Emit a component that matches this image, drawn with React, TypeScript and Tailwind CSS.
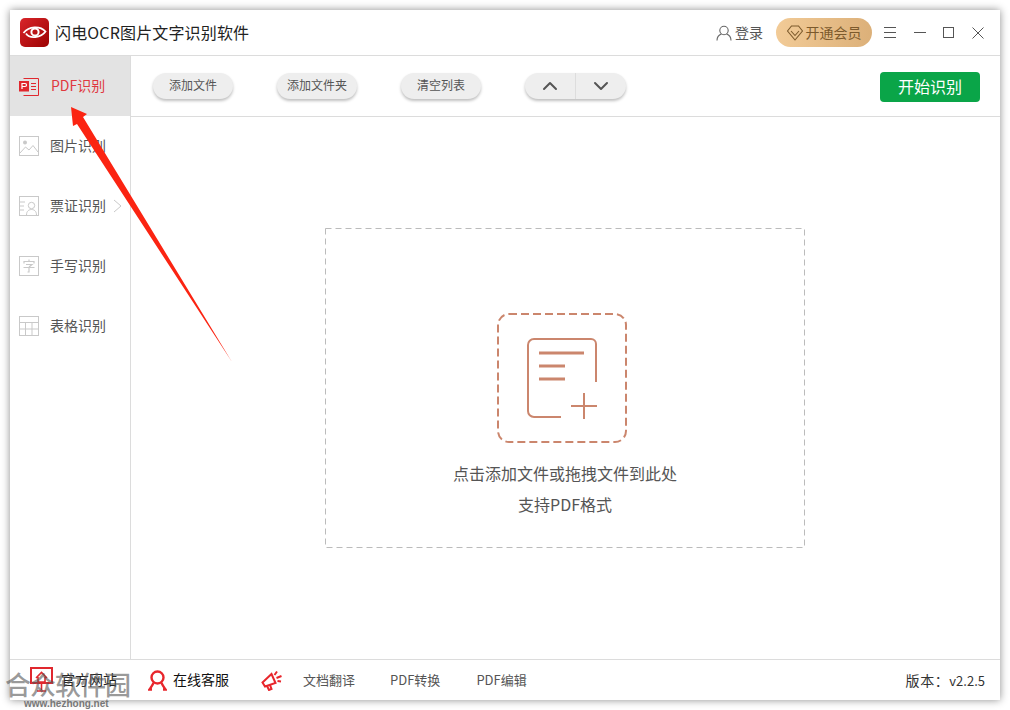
import { ChevronUp, ChevronDown } from 'lucide-react';

const cjk = { fontFamily: '"Noto Sans CJK SC", "Noto Sans", sans-serif' };

function Logo() {
  return (
    <svg width="29" height="29" viewBox="0 0 29 29" fill="none">
      <defs>
        <linearGradient id="logoBg" x1="0" y1="0" x2="1" y2="1">
          <stop offset="0" stopColor="#d9252a" />
          <stop offset="1" stopColor="#9c0202" />
        </linearGradient>
      </defs>
      <rect width="29" height="29" rx="5" fill="url(#logoBg)" />
      <path d="M3.5 15 C9 8 20 7.5 25.5 13.5 C21 20 9.5 21 6 15.5" stroke="#fff" strokeWidth="1.8" />
      <circle cx="15" cy="14" r="3.6" stroke="#fff" strokeWidth="2" />
    </svg>
  );
}

function PdfIcon() {
  return (
    <svg width="21" height="21" viewBox="0 0 21 21" fill="none">
      <path d="M4.5 2.5 H19.5 V19.5 H4.5" stroke="#e0282e" strokeWidth="1" />
      <rect x="0" y="5" width="10" height="10.5" fill="#e0282e" />
      <path d="M3 13 V7.5 H6 A1.5 1.5 0 0 1 6 10.5 H3" stroke="#fff" strokeWidth="1.2" />
      <path d="M12 7.5 H17 M12 10.5 H17 M12 13.5 H17" stroke="#e0282e" strokeWidth="1" />
    </svg>
  );
}

function ImageIcon() {
  return (
    <svg width="20" height="20" viewBox="0 0 20 20" fill="none" stroke="#c9c9c9">
      <rect x="0.5" y="0.5" width="19" height="19" />
      <circle cx="6" cy="6.5" r="2" fill="#c9c9c9" stroke="none" />
      <path d="M1 17 L6.5 11 L10 14 L14 9.5 L19 16" />
    </svg>
  );
}

function CardIcon() {
  return (
    <svg width="20" height="20" viewBox="0 0 20 20" fill="none" stroke="#c9c9c9">
      <rect x="0.5" y="0.5" width="19" height="19" />
      <path d="M1 6 H6 M1 10 H5 M1 14 H5" />
      <circle cx="12.5" cy="9.5" r="3.2" />
      <path d="M7.5 19 C7.5 15 10 13.5 12.5 13.5 C15 13.5 17.5 15 17.5 19" />
    </svg>
  );
}

function HandIcon() {
  return (
    <svg width="20" height="20" viewBox="0 0 20 20" fill="none" stroke="#c9c9c9">
      <rect x="0.5" y="0.5" width="19" height="19" />
      <path d="M10 3.5 V5 M5 7.5 V5.5 H15 V7.5 M7 8.5 H13 L10 11 M4.5 11.5 H15.5 M10 11 V16 L8.5 16" strokeWidth="1.2" />
    </svg>
  );
}

function TableIcon() {
  return (
    <svg width="20" height="20" viewBox="0 0 20 20" fill="none" stroke="#c9c9c9">
      <rect x="0.5" y="0.5" width="19" height="19" />
      <path d="M1 6.5 H19 M1 13 H19 M6.5 6.5 V19 M13 6.5 V19" />
    </svg>
  );
}

function FileAddIcon() {
  return (
    <svg width="70" height="82" viewBox="0 0 70 82" fill="none" stroke="#cb866d" strokeWidth="2">
      <path d="M69 45 V7 A5 5 0 0 0 64 2 H7 A6 6 0 0 0 1 8 V74 A6 6 0 0 0 7 80 H34" />
      <path d="M12 16 H57 M12 29 H38 M12 42 H38" strokeWidth="3" />
      <path d="M44 69 H70 M57 56 V82" />
    </svg>
  );
}

function SideItem(props: { icon: React.ReactNode; label: string; active?: boolean; more?: boolean }) {
  return (
    <div className={props.active ? 'relative flex h-[60px] items-center gap-[11px] bg-[#e3e3e3] pl-[9px]' : 'relative flex h-[60px] items-center gap-[11px] pl-[9px]'}>
      {props.icon}
      <span className={props.active ? 'pb-[2px] text-[14px] text-[#e0383e]' : 'pb-[2px] text-[14px] text-[#555]'}>{props.label}</span>
      {props.more && (
        <svg className="absolute right-[8px] top-[23px]" width="9" height="14" viewBox="0 0 9 14" fill="none" stroke="#c9c9c9">
          <path d="M1 1 L8 7 L1 13" />
        </svg>
      )}
    </div>
  );
}

function ToolButton({ label }: { label: string }) {
  return (
    <button className="flex h-[26px] w-[80px] items-center justify-center rounded-full bg-[#eeeeee] pb-[2px] text-[12px] text-[#555] shadow-[0_2px_3px_rgba(0,0,0,0.25)]">
      {label}
    </button>
  );
}

export default function App() {
  return (
    <div className="relative h-[710px] w-[1010px] overflow-hidden bg-white p-[10px]" style={cjk}>
      <div className="flex h-[690px] w-[990px] flex-col bg-white shadow-[0_0_8px_rgba(0,0,0,0.45)]">
        {/* title bar */}
        <header className="flex h-[46px] shrink-0 items-center border-b border-[#dcdcdc] pl-[10px] pr-[16px]">
          <Logo />
          <span className="ml-[6px] pb-[2px] text-[16px] tracking-[0.15px] text-[#222]">闪电OCR图片文字识别软件</span>
          <div className="ml-auto flex items-center">
            <svg width="16" height="16" viewBox="0 0 16 16" fill="none" stroke="#666" strokeWidth="1.1">
              <circle cx="8" cy="5.5" r="4.2" />
              <path d="M1 15.5 C1 11 4 9.5 5.5 9 M15 15.5 C15 11 12 9.5 10.5 9" />
            </svg>
            <span className="ml-[3px] text-[14px] text-[#555]">登录</span>
            <div className="ml-[13px] flex h-[29px] w-[96px] items-center justify-center gap-[3px] rounded-full bg-gradient-to-r from-[#f2cb97] to-[#dcb079]">
              <svg width="16" height="16" viewBox="0 0 16 16" fill="none" stroke="#7c5a2c" strokeWidth="1.1">
                <path d="M4.5 1 H11.5 L15.5 6 L8 15 L0.5 6 Z" />
                <path d="M4 6 L8 10.5 L12 6" />
              </svg>
              <span className="text-[14px] text-[#7c5a2c]">开通会员</span>
            </div>
            <div className="ml-[12px] flex w-[12px] flex-col gap-[4px]">
              <div className="h-px bg-[#555]" />
              <div className="h-px bg-[#555]" />
              <div className="h-px bg-[#555]" />
            </div>
            <div className="ml-[18px] h-px w-[12px] bg-[#555]" />
            <div className="ml-[17px] h-[11px] w-[11px] border border-[#555]" />
            <svg className="ml-[18px]" width="12" height="12" viewBox="0 0 12 12" stroke="#555">
              <path d="M0.5 0.5 L11.5 11.5 M11.5 0.5 L0.5 11.5" />
            </svg>
          </div>
        </header>

        <div className="flex min-h-0 flex-1">
          {/* left menu */}
          <aside className="w-[121px] shrink-0 border-r border-[#dcdcdc]">
            <SideItem active icon={<PdfIcon />} label="PDF识别" />
            <SideItem icon={<ImageIcon />} label="图片识别" />
            <SideItem more icon={<CardIcon />} label="票证识别" />
            <SideItem icon={<HandIcon />} label="手写识别" />
            <SideItem icon={<TableIcon />} label="表格识别" />
          </aside>

          <main className="flex min-w-0 flex-1 flex-col">
            <div className="flex h-[61px] shrink-0 items-center gap-[44px] border-b border-[#dcdcdc] pl-[22px] pr-[20px]">
              <ToolButton label="添加文件" />
              <ToolButton label="添加文件夹" />
              <ToolButton label="清空列表" />
              <div className="flex h-[26px] w-[101px] items-center rounded-full bg-[#eeeeee] shadow-[0_2px_3px_rgba(0,0,0,0.25)]">
                <div className="flex h-full flex-1 items-center justify-center border-r border-[#dddddd]">
                  <ChevronUp size={24} strokeWidth={2} color="#555" />
                </div>
                <div className="flex h-full flex-1 items-center justify-center">
                  <ChevronDown size={24} strokeWidth={2} color="#555" />
                </div>
              </div>
              <button className="ml-auto mt-[2px] h-[30px] w-[100px] rounded-sm bg-[#0aa548] pb-[3px] text-[16px] text-white">开始识别</button>
            </div>

            <div className="flex flex-1 items-center justify-center pr-[1px]">
              <div className="relative flex h-[320px] w-[480px] flex-col items-center pt-[85px]">
                <svg className="absolute left-0 top-0" width="480" height="320" fill="none" stroke="#bbbbbb">
                  <rect x="0.5" y="0.5" width="479" height="319" strokeDasharray="6 4" />
                </svg>
                <div className="relative mr-[7px] flex h-[130px] w-[130px] items-center justify-center">
                  <svg className="absolute left-0 top-0" width="130" height="130" fill="none" stroke="#cb866d" strokeWidth="2">
                    <rect x="1" y="1" width="128" height="128" rx="11" strokeDasharray="8 4" />
                  </svg>
                  <FileAddIcon />
                </div>
                <p className="mt-[15px] text-[16px] leading-[31px] text-[#555]">点击添加文件或拖拽文件到此处</p>
                <p className="text-[16px] leading-[31px] text-[#555]">支持PDF格式</p>
              </div>
            </div>
          </main>
        </div>

        {/* status bar */}
        <footer className="flex h-[41px] shrink-0 items-center border-t border-[#dcdcdc] pl-[20px] pr-[15px]">
          <svg width="23" height="26" viewBox="0 0 23 26" fill="none" stroke="#e0282e" strokeWidth="2">
            <rect x="1" y="1" width="21" height="15" />
            <path d="M6 11 L11.5 5.5 L17 11 M8 10 V15 H15 V10 M11.5 16 V23 M7 24 H16" strokeWidth="1.6" />
          </svg>
          <span className="ml-[8px] pb-[2px] text-[14px] text-[#222]">官方网站</span>
          <svg className="ml-[31px]" width="19" height="21" viewBox="0 0 19 21" fill="none" stroke="#e8262c" strokeWidth="2.4">
            <circle cx="9.5" cy="7.5" r="6" />
            <path d="M5.5 13 C4 16 2.5 18 1.5 19.5 H4 M13.5 13 C15 16 16.5 18 17.5 19.5 H15" />
          </svg>
          <span className="ml-[6px] pb-[2px] text-[14px] text-[#111]">在线客服</span>
          <svg className="ml-[32px]" width="22" height="21" viewBox="0 0 22 21" fill="none" stroke="#e8262c" strokeWidth="2">
            <path d="M1.5 12.5 L10.5 4 L14.5 13 L4 16.5 Z" />
            <path d="M6 16 L8 20 L10.5 19 L9 15" />
            <path d="M13.5 5 L16 1.5 M15.5 8 L20.5 6 M16.5 11 L20 11.5" />
          </svg>
          <span className="ml-[20px] text-[13px] text-[#555]">文档翻译</span>
          <span className="ml-[35px] text-[13px] text-[#555]">PDF转换</span>
          <span className="ml-[36px] text-[13px] text-[#555]">PDF编辑</span>
          <span className="ml-auto text-[13px] text-[#333]"><span className="text-[14px] tracking-[0.6px]">版本：</span>v2.2.5</span>
        </footer>
      </div>

      {/* red annotation arrow */}
      <svg className="pointer-events-none absolute left-0 top-0" width="1010" height="710" viewBox="0 0 1010 710">
        <polygon points="71,107 87,114 83,117 232,362 77,124 73,126" fill="#fb2412" />
      </svg>

      {/* site watermark */}
      <div className="pointer-events-none absolute left-[5px] top-[668px] text-[26px] font-medium leading-[32px] tracking-[-1px] text-[#55555599]">合众软件园</div>
      <div className="pointer-events-none absolute left-[24px] top-[698px] text-[10px] font-bold leading-[12px] text-[#777]" style={{ fontFamily: '"Liberation Sans", sans-serif' }}>www.hezhong.net</div>
    </div>
  );
}
